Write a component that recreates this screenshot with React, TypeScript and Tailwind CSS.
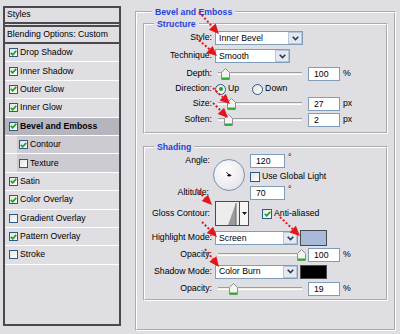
import React from 'react'

type Effect = { name: string; checked: boolean; active?: boolean; sub?: boolean }

const effects: Effect[] = [
  { name: 'Drop Shadow', checked: true },
  { name: 'Inner Shadow', checked: true },
  { name: 'Outer Glow', checked: true },
  { name: 'Inner Glow', checked: true },
  { name: 'Bevel and Emboss', checked: true, active: true },
  { name: 'Contour', checked: true, sub: true },
  { name: 'Texture', checked: false, sub: true },
  { name: 'Satin', checked: true },
  { name: 'Color Overlay', checked: true },
  { name: 'Gradient Overlay', checked: false },
  { name: 'Pattern Overlay', checked: true },
  { name: 'Stroke', checked: false },
]

// start -> tip of each red marker arrow
const arrows: [number, number, number, number][] = [
  [199, 12, 219, 34],
  [199, 40, 217, 56],
  [213, 88, 230, 104],
  [213, 103, 228, 118],
  [196, 189, 212, 205],
  [202, 222, 217, 237],
  [280, 217, 300, 236],
  [205, 249, 219, 267],
]

function Check({ checked, small = false }: { checked: boolean; small?: boolean }) {
  return (
    <span
      className={`${small ? 'w-[9px] h-[9px]' : 'w-[10px] h-[10px]'} shrink-0 flex items-center justify-center border border-[#2a5a8a] bg-gradient-to-br from-[#e4e4e0] to-white`}
    >
      {checked && (
        <svg width="7" height="6" viewBox="0 0 7 6">
          <path d="M0.8 2.8 L2.7 4.8 L6.2 0.9" stroke="#21a121" strokeWidth="1.7" fill="none" />
        </svg>
      )}
    </span>
  )
}

function Radio({ checked }: { checked: boolean }) {
  return (
    <span className="w-[11px] h-[11px] shrink-0 rounded-full border border-[#2a5a8a] bg-gradient-to-br from-[#e2e2de] to-white flex items-center justify-center">
      {checked && <span className="w-[4px] h-[4px] rounded-full bg-[#21a121]" />}
    </span>
  )
}

function Select({ value, w }: { value: string; w: string }) {
  return (
    <div className={`${w} h-[14px] flex items-center border border-[#7f9db9] bg-white`}>
      <span className="flex-1 pl-[3px] leading-none">{value}</span>
      <span className="w-[14px] h-[12px] flex items-center justify-center border border-[#b8c6dc] bg-[#e3e8f1]">
        <svg width="7" height="5" viewBox="0 0 7 5">
          <path d="M0.7 0.7 L3.5 3.6 L6.3 0.7" stroke="#2e3a50" strokeWidth="1.6" fill="none" />
        </svg>
      </span>
    </div>
  )
}

function Field({ value, w = 'w-[32px]' }: { value: string; w?: string }) {
  return (
    <div className={`${w} h-[14px] flex items-center border border-[#7f9db9] bg-white pl-[5px] leading-none`}>
      {value}
    </div>
  )
}

function Slider({ pos }: { pos: number }) {
  return (
    <div className="relative w-[90px] h-[14px] shrink-0">
      <div className="absolute left-[3px] right-[3px] top-[5px] h-[3px] border-t border-[#9d9ca2] border-b border-b-white bg-[#eeede6]" />
      <svg className="absolute top-[1px]" style={{ left: pos - 1 }} width="9" height="12" viewBox="0 0 9 12">
        <path d="M0.5 4.5 L4.5 0.5 L8.5 4.5 L8.5 11.5 L0.5 11.5 Z" fill="#f3f3f1" stroke="#8f8f8f" />
        <rect x="1" y="9.5" width="7" height="2" fill="#27b027" />
      </svg>
    </div>
  )
}

function Label({ children }: { children: React.ReactNode }) {
  return <span className="w-[68px] shrink-0 text-right pr-[1px]">{children}</span>
}

function Arrow({ x1, y1, x2, y2 }: { x1: number; y1: number; x2: number; y2: number }) {
  const dx = x2 - x1
  const dy = y2 - y1
  const len = Math.hypot(dx, dy)
  const ux = dx / len
  const uy = dy / len
  const bx = x2 - ux * 10
  const by = y2 - uy * 10
  const px = -uy * 4.5
  const py = ux * 4.5
  return (
    <g>
      <line x1={x1} y1={y1} x2={bx} y2={by} stroke="#e8141c" strokeWidth="2" strokeDasharray="2 2" />
      <polygon points={`${x2},${y2} ${bx + px},${by + py} ${bx - px},${by - py}`} fill="#e3141b" />
    </g>
  )
}

export default function App() {
  return (
    <div className="relative w-[400px] h-[334px] overflow-hidden bg-[#dfdee3] flex font-['Liberation_Sans',Arial,sans-serif] text-[8.7px] text-black">
      {/* styles list */}
      <div className="ml-[3px] mt-[6px] w-[118px] h-[320px] border-2 border-[#4a4a4e] flex flex-col">
        <div className="h-[16px] flex items-center pl-[2px] border-b-2 border-[#4a4a4e]">Styles</div>
        <div className="mt-[1px] h-[19px] flex items-center pl-[2px] border-t-2 border-b-2 border-[#4a4a4e]">
          Blending Options: Custom
        </div>
        {effects.map((e) => (
          <div key={e.name} className={`h-[18.4px] flex border-b border-white ${e.sub ? 'pl-[12px]' : ''}`}>
            <div
              className={`flex-1 flex items-center gap-[2px] ${e.sub ? 'bg-[#cccbd1] pl-[2px]' : 'pl-[4px]'} ${e.active ? 'bg-[#b6b5bd] font-bold' : ''}`}
            >
              <Check checked={e.checked} small />
              <span>{e.name}</span>
            </div>
          </div>
        ))}
      </div>

      {/* settings */}
      <fieldset className="ml-[14px] mt-[6px] w-[261px] h-[325px] border-2 border-white [border-style:groove] pl-[6px]">
        <legend className="ml-[9px] px-[3px] leading-[12px] font-bold text-[#1f45d6]">Bevel and Emboss</legend>

        <fieldset className="w-[245px] h-[116px] border-2 border-white [border-style:groove]">
          <legend className="ml-[9px] px-[3px] leading-[12px] font-bold text-[#1f45d6]">Structure</legend>
          <div className="mt-[1px] h-[14px] flex items-center gap-[2px]">
            <Label>Style:</Label>
            <Select value="Inner Bevel" w="w-[88px]" />
          </div>
          <div className="mt-[4px] h-[14px] flex items-center gap-[2px]">
            <Label>Technique:</Label>
            <Select value="Smooth" w="w-[75px]" />
          </div>
          <div className="mt-[4px] h-[14px] flex items-center gap-[2px]">
            <Label>Depth:</Label>
            <Slider pos={7} />
            <span className="ml-[1px]">
              <Field value="100" />
            </span>
            <span className="ml-[1px]">%</span>
          </div>
          <div className="mt-[1px] h-[14px] flex items-center gap-[2px]">
            <Label>Direction:</Label>
            <Radio checked />
            <span>Up</span>
            <span className="ml-[11px]">
              <Radio checked={false} />
            </span>
            <span>Down</span>
          </div>
          <div className="mt-[1px] h-[14px] flex items-center gap-[2px]">
            <Label>Size:</Label>
            <Slider pos={13} />
            <span className="ml-[1px]">
              <Field value="27" />
            </span>
            <span className="ml-[1px]">px</span>
          </div>
          <div className="mt-[2px] h-[14px] flex items-center gap-[2px]">
            <Label>Soften:</Label>
            <Slider pos={10} />
            <span className="ml-[1px]">
              <Field value="2" />
            </span>
            <span className="ml-[1px]">px</span>
          </div>
        </fieldset>

        <fieldset className="mt-[7px] w-[245px] h-[160px] border-2 border-white [border-style:groove]">
          <legend className="ml-[9px] px-[3px] leading-[12px] font-bold text-[#1f45d6]">Shading</legend>
          <div className="mt-[1px] grid grid-cols-[68px_33px_auto] grid-rows-[14px_18px_14px] gap-x-[2px]">
            <span className="col-start-1 row-start-1 self-center text-right pr-[3px]">Angle:</span>
            <div className="col-start-2 row-start-1 row-span-3 self-start mt-[5px] -ml-[2px] w-[32px] h-[32px] rounded-full border border-[#7f8fae] bg-[radial-gradient(circle_at_40%_35%,#ffffff,#e8e8ec_70%,#c9c9d0)] flex items-center justify-center">
              <svg width="8" height="8" viewBox="0 0 8 8">
                <path d="M4 4 L1.6 1.2" stroke="#111" strokeWidth="1" />
                <rect x="3" y="3" width="2.4" height="2.4" fill="#111" />
                <path d="M2 4.5 H6.5" stroke="#111" strokeWidth="0.8" />
              </svg>
            </div>
            <div className="col-start-3 row-start-1 flex items-center gap-[3px]">
              <Field value="120" w="w-[35px]" />
              <span className="-mt-[6px]">°</span>
            </div>
            <div className="col-start-3 row-start-2 flex items-center gap-[2px]">
              <Check checked={false} />
              <span>Use Global Light</span>
            </div>
            <span className="col-start-1 row-start-3 self-center text-right pr-[4px]">Altitude:</span>
            <div className="col-start-3 row-start-3 flex items-center gap-[3px]">
              <Field value="70" w="w-[35px]" />
              <span className="-mt-[6px]">°</span>
            </div>
          </div>

          <div className="mt-[1px] h-[25px] flex items-center gap-[2px]">
            <span className="w-[68px] shrink-0 text-right pr-[3px]">Gloss Contour:</span>
            <div className="w-[34px] h-[25px] flex border border-[#4a4a4e] bg-[#f2f2f2]">
              <svg className="flex-1" viewBox="0 0 23 23" preserveAspectRatio="none">
                <rect x="0" y="0" width="23" height="23" fill="#ededed" />
                <path d="M12 23 L20 1 L20 23 Z" fill="#9a9a9a" />
                <path d="M20 1 L20 23" stroke="#555" strokeWidth="0.8" />
              </svg>
              <span className="w-[9px] flex items-center justify-center border-l border-[#4a4a4e] bg-[#f6f6f6]">
                <svg width="5" height="3" viewBox="0 0 5 3">
                  <path d="M0 0 H5 L2.5 3 Z" fill="#111" />
                </svg>
              </span>
            </div>
            <span className="ml-[11px]">
              <Check checked />
            </span>
            <span>Anti-aliased</span>
          </div>

          <div className="mt-[4px] h-[16px] flex items-center gap-[2px]">
            <Label>Highlight Mode:</Label>
            <Select value="Screen" w="w-[83px]" />
            <span className="w-[27px] h-[16px] border border-[#4a4a4e] bg-[#a9b9d9]" />
          </div>
          <div className="mt-[2px] h-[14px] flex items-center gap-[2px]">
            <Label>Opacity:</Label>
            <Slider pos={83} />
            <span className="ml-[1px]">
              <Field value="100" />
            </span>
            <span className="ml-[1px]">%</span>
          </div>
          <div className="mt-[2px] h-[15px] flex items-center gap-[2px]">
            <Label>Shadow Mode:</Label>
            <Select value="Color Burn" w="w-[83px]" />
            <span className="w-[27px] h-[14px] border border-[#4a4a4e] bg-black" />
          </div>
          <div className="mt-[3px] h-[14px] flex items-center gap-[2px]">
            <Label>Opacity:</Label>
            <Slider pos={15} />
            <span className="ml-[1px]">
              <Field value="19" />
            </span>
            <span className="ml-[1px]">%</span>
          </div>
        </fieldset>
      </fieldset>

      {/* red markers drawn over the dialog */}
      <svg className="absolute inset-0 pointer-events-none" width="400" height="334">
        {arrows.map(([x1, y1, x2, y2], i) => (
          <Arrow key={i} x1={x1} y1={y1} x2={x2} y2={y2} />
        ))}
      </svg>
    </div>
  )
}
